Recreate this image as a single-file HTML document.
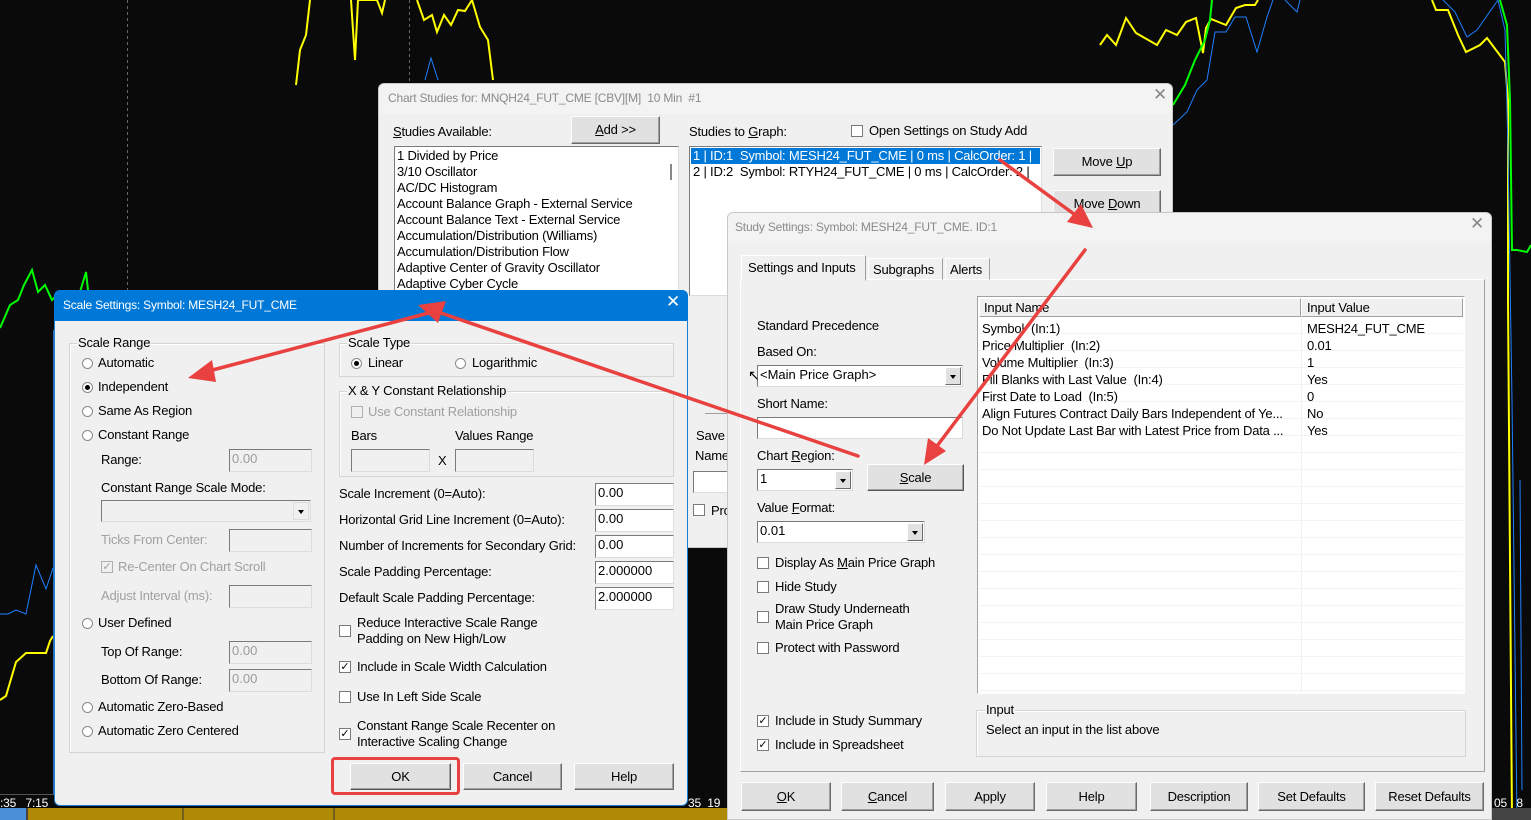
<!DOCTYPE html>
<html><head><meta charset="utf-8"><style>
*{box-sizing:border-box;margin:0;padding:0}
body{width:1531px;height:820px;overflow:hidden;background:#0a0a0a;position:relative;font-family:"Liberation Sans",Arial,sans-serif;font-size:13px;color:#000}
.a{position:absolute}
.t{position:absolute;white-space:nowrap;line-height:16px;font-size:13px;letter-spacing:-0.2px}
.g{color:#a0a0a0}
.dlg{position:absolute;background:#f0f0f0}
.in{position:absolute;background:#fff;border:1px solid;border-color:#7a7a7a #dcdcdc #dcdcdc #7a7a7a;font-size:13px;line-height:18px;padding-left:2px;overflow:hidden;white-space:nowrap}
.in.d{background:#f0f0f0;color:#9a9a9a}
.btn{position:absolute;background:#e1e1e1;border:1px solid;border-color:#fdfdfd #6a6a6a #6a6a6a #fdfdfd;box-shadow:inset -1px -1px #a0a0a0;text-align:center;font-size:13px;letter-spacing:-0.2px}
.grp{position:absolute;border:1px solid #d5d5d5;box-shadow:inset 1px 1px #fff}
.gl{position:absolute;top:-9px;left:7px;background:#f0f0f0;padding:0 1px;line-height:16px;white-space:nowrap;letter-spacing:-0.2px}
.r{position:absolute;width:11px;height:11px;border-radius:50%;background:#fff;border:1px solid #8a8a8a}
.r.on::after{content:"";position:absolute;left:2px;top:2px;width:5px;height:5px;border-radius:50%;background:#000}
.c{position:absolute;width:12px;height:12px;background:#fff;border:1px solid #7a7a7a;font-size:11px;line-height:10px;text-align:center}
.c.d{background:#f0f0f0;border-color:#b0b0b0;color:#a0a0a0}
.dd{position:absolute;right:1px;top:1px;bottom:1px;width:16px;background:#e1e1e1;border:1px solid;border-color:#fff #6a6a6a #6a6a6a #fff}
.dd::after{content:"";position:absolute;left:4px;top:7px;border:3.5px solid transparent;border-top:4px solid #000}
u{text-decoration:underline}
</style></head><body>

<svg class="a" style="left:0;top:0" width="1531" height="820">
<line x1="127.5" y1="0" x2="127.5" y2="795" stroke="#666" stroke-dasharray="3,3"/>
<line x1="409.5" y1="0" x2="409.5" y2="300" stroke="#666" stroke-dasharray="3,3"/>
<polyline fill="none" stroke="#ffff00" stroke-width="2" points="296,85 300,50 306,35 310,0"/>
<polyline fill="none" stroke="#ffff00" stroke-width="2" points="351,0 355,60 358,0 377,0 382,13 385,0"/>
<polyline fill="none" stroke="#ffff00" stroke-width="2" points="417,0 424,20 432,15 437,32 444,15 451,25 458,10 465,11 472,0 480,27 488,40 493,80"/>
<polyline fill="none" stroke="#1e7fff" stroke-width="1" points="425,80 431,58 438,80"/>
<polyline fill="none" stroke="#ffff00" stroke-width="2" points="1100,45 1107,35 1116,45 1126,18 1136,33 1157,45 1166,30 1177,35 1186,22 1196,18 1203,53 1206,28 1211,19 1226,25 1236,8 1245,5 1255,5 1258,0"/>
<polyline fill="none" stroke="#00ff00" stroke-width="2" points="1173,105 1185,85 1195,60 1205,40 1210,20 1212,0"/>
<polyline fill="none" stroke="#1e7fff" stroke-width="1" points="1173,125 1187,112 1197,90 1207,80 1212,50 1215,32 1226,32 1235,17 1246,17 1257,52 1267,17 1273,0"/>
<polyline fill="none" stroke="#1e7fff" stroke-width="1" points="1285,0 1297,12 1300,0"/>
<polyline fill="none" stroke="#ffff00" stroke-width="2" points="1432,0 1436,10 1448,10 1458,35 1466,52 1480,45 1487,38 1505,62 1508,100 1508,300 1512,820"/>
<polyline fill="none" stroke="#1e7fff" stroke-width="1" points="1443,0 1455,12 1467,37 1477,30 1498,0 1505,30 1508,150 1512,400 1517,820"/>
<polyline fill="none" stroke="#00ff00" stroke-width="2" points="1500,0 1507,25 1510,100 1512,250 1517,250 1527,252 1531,245"/>
<polyline fill="none" stroke="#00ff00" stroke-width="2" points="0,328 10,305 18,300 24,285 32,270 38,292 45,285 52,300 60,292"/>
<polyline fill="none" stroke="#00ff00" stroke-width="2" points="80,292 86,272 88,290"/>
<polyline fill="none" stroke="#1e7fff" stroke-width="1" points="0,614 8,614 16,610 26,614 36,565 46,589 53,568"/>
<polyline fill="none" stroke="#ffff00" stroke-width="2" points="0,700 6,696 16,662 26,653 46,653 50,641 53,636"/>
<line x1="53.5" y1="330" x2="53.5" y2="795" stroke="#2a70c0"/>
<line x1="1520" y1="480" x2="1522" y2="790" stroke="#1e7fff"/>
<line x1="0" y1="794.5" x2="54" y2="794.5" stroke="#555"/>
<rect x="0" y="808" width="1531" height="12" fill="#444"/>
<rect x="0" y="808" width="26" height="12" fill="#4a8fd8"/>
<rect x="28" y="808" width="700" height="12" fill="#b08a06"/>
<line x1="183" y1="808" x2="183" y2="820" stroke="#333"/>
<line x1="334" y1="808" x2="334" y2="820" stroke="#333"/>
</svg>
<div class="t" style="left:0;top:795px;color:#fff;font-size:12px">:35&nbsp;&nbsp;&nbsp;7:15</div>
<div class="t" style="left:688px;top:795px;color:#fff;font-size:12px">35&nbsp;&nbsp;19</div>
<div class="t" style="left:1494px;top:795px;color:#fff;font-size:12px">05&nbsp;&nbsp;&nbsp;8</div>

<div class="dlg" style="left:378px;top:83px;width:795px;height:465px;border:1px solid #c8c8c8;border-radius:6px 6px 0 0">
 <div class="a" style="left:0;top:0;width:793px;height:30px;background:#f3f3f3;border-radius:6px 6px 0 0"></div>
 <div class="t" style="left:9px;top:6px;color:#8a8a8a;font-size:12px">Chart Studies for: MNQH24_FUT_CME [CBV][M]&nbsp; 10 Min&nbsp; #1</div>
 <div class="t" style="left:774px;top:3px;color:#888;font-size:17px">✕</div>
 <div class="t" style="left:14px;top:40px"><u>S</u>tudies Available:</div>
 <div class="btn" style="left:192px;top:32px;width:89px;height:28px;line-height:26px"><u>A</u>dd &gt;&gt;</div>
 <div class="a" style="left:15px;top:62px;width:285px;height:150px;background:#fff;border:1px solid;border-color:#7a7a7a #dcdcdc #dcdcdc #7a7a7a"></div>
 <div class="t" style="left:18px;top:64px;line-height:16px">1 Divided by Price<br>3/10 Oscillator<br>AC/DC Histogram<br>Account Balance Graph - External Service<br>Account Balance Text - External Service<br>Accumulation/Distribution (Williams)<br>Accumulation/Distribution Flow<br>Adaptive Center of Gravity Oscillator<br>Adaptive Cyber Cycle</div>
 <div class="a" style="left:291px;top:80px;width:2px;height:16px;background:#888"></div>
 <div class="t" style="left:310px;top:40px">Studies to <u>G</u>raph:</div>
 <div class="c" style="left:472px;top:41px"></div>
 <div class="t" style="left:490px;top:39px">Open Settings on Study Add</div>
 <div class="a" style="left:310px;top:62px;width:353px;height:150px;background:#fff;border:1px solid;border-color:#7a7a7a #dcdcdc #dcdcdc #7a7a7a"></div>
 <div class="a" style="left:312px;top:64px;width:349px;height:16px;background:#0078d7"></div>
 <div class="t" style="left:314px;top:64px;color:#fff">1 | ID:1&nbsp; Symbol: MESH24_FUT_CME | 0 ms | CalcOrder: 1 |</div>
 <div class="t" style="left:314px;top:80px">2 | ID:2&nbsp; Symbol: RTYH24_FUT_CME | 0 ms | CalcOrder: 2 |</div>
 <div class="btn" style="left:674px;top:64px;width:108px;height:28px;line-height:26px">Move <u>U</u>p</div>
 <div class="btn" style="left:674px;top:106px;width:108px;height:28px;line-height:26px">Move <u>D</u>own</div>
 <div class="a" style="left:326px;top:329px;width:30px;border-top:1px solid #a0a0a0"></div>
 <div class="t" style="left:317px;top:344px">Save</div>
 <div class="t" style="left:316px;top:364px">Name</div>
 <div class="in" style="left:314px;top:387px;width:40px;height:22px"></div>
 <div class="c" style="left:314px;top:420px"></div>
 <div class="t" style="left:332px;top:419px">Pro</div>
</div>

<div class="dlg" style="left:727px;top:212px;width:765px;height:608px;border:1px solid #c8c8c8;border-radius:6px 6px 0 0">
 <div class="a" style="left:0;top:0;width:763px;height:30px;background:#f3f3f3;border-radius:6px 6px 0 0"></div>
 <div class="t" style="left:7px;top:6px;color:#8a8a8a;font-size:12px">Study Settings: Symbol: MESH24_FUT_CME. ID:1</div>
 <div class="t" style="left:742px;top:3px;color:#888;font-size:17px">✕</div>
 <div class="a" style="left:12px;top:66px;width:745px;height:493px;border:1px solid;border-color:#fff #a0a0a0 #a0a0a0 #fff"></div>
 <div class="a" style="left:13px;top:42px;width:125px;height:26px;background:#f0f0f0;border:1px solid;border-color:#fff #a0a0a0 transparent #fff"></div>
 <div class="t" style="left:20px;top:47px;font-size:13px">Settings and Inputs</div>
 <div class="a" style="left:140px;top:45px;width:75px;height:22px;border:1px solid;border-color:#fff #a0a0a0 transparent #fff"></div>
 <div class="t" style="left:145px;top:49px">Subgraphs</div>
 <div class="a" style="left:217px;top:45px;width:45px;height:22px;border:1px solid;border-color:#fff #a0a0a0 transparent #fff"></div>
 <div class="t" style="left:222px;top:49px">Alerts</div>

 <div class="t" style="left:29px;top:105px">Standard Precedence</div>
 <div class="t" style="left:29px;top:131px">Based On:</div>
 <div class="in" style="left:29px;top:152px;width:206px;height:22px">&lt;Main Price Graph&gt;<div class="dd"></div></div>
 <div class="t" style="left:20px;top:154px;font-size:14px">↖</div>
 <div class="t" style="left:29px;top:183px">Short Name:</div>
 <div class="in" style="left:29px;top:204px;width:206px;height:22px"></div>
 <div class="t" style="left:29px;top:235px">Chart <u>R</u>egion:</div>
 <div class="in" style="left:29px;top:256px;width:96px;height:22px">1<div class="dd"></div></div>
 <div class="btn" style="left:139px;top:251px;width:97px;height:27px;line-height:25px;border-color:#fff #555 #555 #fff"><u>S</u>cale</div>
 <div class="t" style="left:29px;top:287px">Value <u>F</u>ormat:</div>
 <div class="in" style="left:29px;top:308px;width:168px;height:22px">0.01<div class="dd"></div></div>
 <div class="c" style="left:29px;top:344px"></div><div class="t" style="left:47px;top:342px">Display As <u>M</u>ain Price Graph</div>
 <div class="c" style="left:29px;top:368px"></div><div class="t" style="left:47px;top:366px">Hide Study</div>
 <div class="c" style="left:29px;top:398px"></div><div class="t" style="left:47px;top:388px">Draw Study Underneath<br>Main Price Graph</div>
 <div class="c" style="left:29px;top:429px"></div><div class="t" style="left:47px;top:427px">Protect with Password</div>
 <div class="c" style="left:29px;top:502px">✓</div><div class="t" style="left:47px;top:500px">Include in Study Summary</div>
 <div class="c" style="left:29px;top:526px">✓</div><div class="t" style="left:47px;top:524px">Include in Spreadsheet</div>

 <div class="a" style="left:249px;top:83px;width:488px;height:398px;background:#fff;border:1px solid;border-color:#a0a0a0 #fff #fff #a0a0a0"></div>
 <div class="a" style="left:251px;top:85px;width:322px;height:19px;background:#f0f0f0;border:1px solid;border-color:#fff #a0a0a0 #a0a0a0 #fff"></div>
 <div class="a" style="left:573px;top:85px;width:162px;height:19px;background:#f0f0f0;border:1px solid;border-color:#fff #a0a0a0 #a0a0a0 #fff"></div>
 <div class="t" style="left:256px;top:87px">Input Name</div>
 <div class="t" style="left:579px;top:87px">Input Value</div>
 <div class="a" style="left:573px;top:104px;width:1px;height:376px;background:#f0f0f0"></div>
 <div class="a" style="left:251px;top:104px;width:484px;height:376px;background:repeating-linear-gradient(to bottom,transparent 0 16px,#f3f3f3 16px 17px)"></div>
 <div class="t" style="left:254px;top:107px;line-height:17px">Symbol&nbsp; (In:1)<br>Price Multiplier&nbsp; (In:2)<br>Volume Multiplier&nbsp; (In:3)<br>Fill Blanks with Last Value&nbsp; (In:4)<br>First Date to Load&nbsp; (In:5)<br>Align Futures Contract Daily Bars Independent of Ye...<br>Do Not Update Last Bar with Latest Price from Data ...</div>
 <div class="t" style="left:579px;top:107px;line-height:17px">MESH24_FUT_CME<br>0.01<br>1<br>Yes<br>0<br>No<br>Yes</div>
 <div class="grp" style="left:248px;top:497px;width:490px;height:47px"><div class="gl" style="left:8px">Input</div></div>
 <div class="t" style="left:258px;top:509px">Select an input in the list above</div>

 <div class="btn" style="left:13px;top:569px;width:90px;height:29px;line-height:27px"><u>O</u>K</div>
 <div class="btn" style="left:113px;top:569px;width:93px;height:29px;line-height:27px"><u>C</u>ancel</div>
 <div class="btn" style="left:217px;top:569px;width:90px;height:29px;line-height:27px">Apply</div>
 <div class="btn" style="left:318px;top:569px;width:91px;height:29px;line-height:27px">Help</div>
 <div class="btn" style="left:422px;top:569px;width:98px;height:29px;line-height:27px">Description</div>
 <div class="btn" style="left:530px;top:569px;width:107px;height:29px;line-height:27px">Set Defaults</div>
 <div class="btn" style="left:647px;top:569px;width:109px;height:29px;line-height:27px">Reset Defaults</div>
</div>

<div class="dlg" style="left:54px;top:290px;width:634px;height:516px;border:1px solid #1a7fd4;border-radius:6px 6px 6px 6px">
 <div class="a" style="left:-1px;top:-1px;width:634px;height:31px;background:#0078d7;border-radius:6px 6px 0 0"></div>
 <div class="t" style="left:8px;top:6px;color:#fff;font-size:12px">Scale Settings: Symbol: MESH24_FUT_CME</div>
 <div class="t" style="left:611px;top:3px;color:#fff;font-size:17px">✕</div>

 <div class="grp" style="left:14px;top:52px;width:256px;height:410px"><div class="gl">Scale Range</div></div>
 <div class="r" style="left:27px;top:67px"></div><div class="t" style="left:43px;top:64px">Automatic</div>
 <div class="r on" style="left:27px;top:91px"></div><div class="t" style="left:43px;top:88px">Independent</div>
 <div class="r" style="left:27px;top:115px"></div><div class="t" style="left:43px;top:112px">Same As Region</div>
 <div class="r" style="left:27px;top:139px"></div><div class="t" style="left:43px;top:136px">Constant Range</div>
 <div class="t" style="left:46px;top:161px">Range:</div>
 <div class="in d" style="left:174px;top:158px;width:83px;height:23px">0.00</div>
 <div class="t" style="left:46px;top:189px">Constant Range Scale Mode:</div>
 <div class="in d" style="left:46px;top:209px;width:210px;height:22px"><div class="dd" style="background:#f0f0f0;border-color:#ddd"></div></div>
 <div class="t g" style="left:46px;top:241px">Ticks From Center:</div>
 <div class="in d" style="left:174px;top:238px;width:83px;height:23px"></div>
 <div class="c d" style="left:46px;top:270px">✓</div><div class="t g" style="left:63px;top:268px">Re-Center On Chart Scroll</div>
 <div class="t g" style="left:46px;top:297px">Adjust Interval (ms):</div>
 <div class="in d" style="left:174px;top:294px;width:83px;height:23px"></div>
 <div class="r" style="left:27px;top:327px"></div><div class="t" style="left:43px;top:324px">User Defined</div>
 <div class="t" style="left:46px;top:353px">Top Of Range:</div>
 <div class="in d" style="left:174px;top:350px;width:83px;height:23px">0.00</div>
 <div class="t" style="left:46px;top:381px">Bottom Of Range:</div>
 <div class="in d" style="left:174px;top:378px;width:83px;height:23px">0.00</div>
 <div class="r" style="left:27px;top:411px"></div><div class="t" style="left:43px;top:408px">Automatic Zero-Based</div>
 <div class="r" style="left:27px;top:435px"></div><div class="t" style="left:43px;top:432px">Automatic Zero Centered</div>

 <div class="grp" style="left:284px;top:52px;width:335px;height:34px"><div class="gl">Scale Type</div></div>
 <div class="r on" style="left:296px;top:67px"></div><div class="t" style="left:313px;top:64px">Linear</div>
 <div class="r" style="left:400px;top:67px"></div><div class="t" style="left:417px;top:64px">Logarithmic</div>
 <div class="grp" style="left:284px;top:100px;width:335px;height:86px"><div class="gl">X &amp; Y Constant Relationship</div></div>
 <div class="c d" style="left:296px;top:115px"></div><div class="t g" style="left:313px;top:113px">Use Constant Relationship</div>
 <div class="t" style="left:296px;top:137px">Bars</div>
 <div class="t" style="left:400px;top:137px">Values Range</div>
 <div class="in d" style="left:296px;top:158px;width:79px;height:23px"></div>
 <div class="t" style="left:383px;top:162px">X</div>
 <div class="in d" style="left:400px;top:158px;width:79px;height:23px"></div>

 <div class="t" style="left:284px;top:195px">Scale Increment (0=Auto):</div>
 <div class="in" style="left:540px;top:192px;width:79px;height:23px">0.00</div>
 <div class="t" style="left:284px;top:221px">Horizontal Grid Line Increment (0=Auto):</div>
 <div class="in" style="left:540px;top:218px;width:79px;height:23px">0.00</div>
 <div class="t" style="left:284px;top:247px">Number of Increments for Secondary Grid:</div>
 <div class="in" style="left:540px;top:244px;width:79px;height:23px">0.00</div>
 <div class="t" style="left:284px;top:273px">Scale Padding Percentage:</div>
 <div class="in" style="left:540px;top:270px;width:79px;height:23px">2.000000</div>
 <div class="t" style="left:284px;top:299px">Default Scale Padding Percentage:</div>
 <div class="in" style="left:540px;top:296px;width:79px;height:23px">2.000000</div>
 <div class="c" style="left:284px;top:334px"></div><div class="t" style="left:302px;top:324px">Reduce Interactive Scale Range<br>Padding on New High/Low</div>
 <div class="c" style="left:284px;top:370px">✓</div><div class="t" style="left:302px;top:368px">Include in Scale Width Calculation</div>
 <div class="c" style="left:284px;top:400px"></div><div class="t" style="left:302px;top:398px">Use In Left Side Scale</div>
 <div class="c" style="left:284px;top:437px">✓</div><div class="t" style="left:302px;top:427px">Constant Range Scale Recenter on<br>Interactive Scaling Change</div>

 <div class="a" style="left:276px;top:466px;width:129px;height:38px;border:3px solid #e8413f;border-radius:4px"></div>
 <div class="btn" style="left:295px;top:472px;width:101px;height:27px;line-height:25px;border-color:#fff #555 #555 #fff">OK</div>
 <div class="btn" style="left:408px;top:472px;width:99px;height:27px;line-height:25px">Cancel</div>
 <div class="btn" style="left:519px;top:472px;width:100px;height:27px;line-height:25px">Help</div>
</div>

<svg class="a" style="left:0;top:0" width="1531" height="820">
<g stroke="#e8413f" stroke-width="3.5" fill="#e8413f" stroke-linecap="round">
<line x1="440" y1="310" x2="205" y2="372"/>
<polygon points="188,378 212,360 216,382" stroke="none"/>
<line x1="858" y1="456" x2="438" y2="312"/>
<polygon points="418,305 446,301 438,323" stroke="none"/>
<line x1="1000" y1="160" x2="1078" y2="217"/>
<polygon points="1093,228 1067,222 1081,204" stroke="none"/>
<line x1="1085" y1="250" x2="934" y2="450"/>
<polygon points="924,465 928,438 946,451" stroke="none"/>
</g>
</svg>
</body></html>
